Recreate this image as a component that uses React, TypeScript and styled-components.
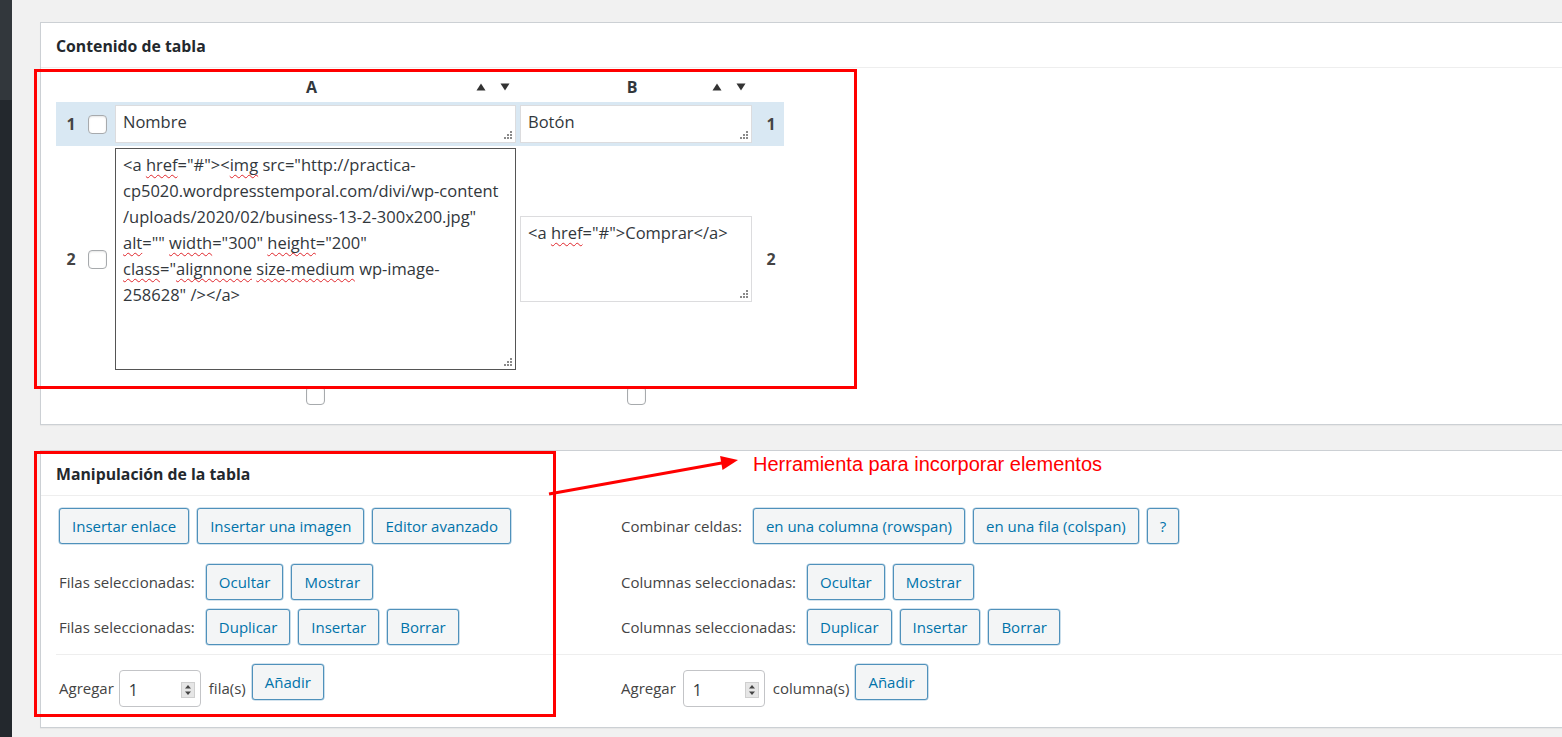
import React from "react";
import styled, { createGlobalStyle } from "styled-components";

const Global = createGlobalStyle`
  html, body { margin: 0; padding: 0; background: #f1f1f1; }
  body { font-family: "Open Sans", "Noto Sans", sans-serif; color: #444; overflow: hidden; }
  * { box-sizing: border-box; }
`;

const Page = styled.div`
  position: relative;
  display: flex;
  width: 1562px;
  height: 737px;
  overflow: hidden;
  background: #f1f1f1;
`;

const Sidebar = styled.div`
  width: 12px;
  flex: none;
  background: linear-gradient(#32373c 0 100px, #23282d 100px);
`;

const Main = styled.main`
  flex: 1;
  padding: 22px 0 0 28px;
  display: flex;
  flex-direction: column;
  gap: 25px;
`;

const Postbox = styled.section`
  background: #fff;
  border: 1px solid #ccd0d4;
  border-right: none;
  box-shadow: 0 1px 1px rgba(0, 0, 0, 0.04);
`;

const BoxTitle = styled.h2`
  margin: 0;
  height: 45px;
  padding: 2px 15px 0;
  display: flex;
  align-items: center;
  font-size: 15.8px;
  font-weight: 700;
  color: #23282d;
  border-bottom: 1px solid #eee;
`;

/* ---------- table editor ---------- */

const EditorArea = styled.div`
  padding: 0 0 19px 15px;
`;

const TRow = styled.div<{ $h: number; $bg?: boolean; $align?: string; $pt?: number }>`
  display: grid;
  grid-template-columns: 26px 31px 405px 236px 30px;
  width: 728px;
  height: ${(p) => p.$h}px;
  padding-top: ${(p) => p.$pt ?? 0}px;
  align-items: ${(p) => p.$align ?? "center"};
  background: ${(p) => (p.$bg ? "#d9e8f3" : "transparent")};
`;

const RowNum = styled.div`
  font-weight: 700;
  font-size: 16px;
  color: #444;
  text-align: center;
  padding-left: 4px;
`;

const CheckCell = styled.div`
  display: flex;
  justify-content: center;
`;

const Check = styled.span`
  display: block;
  width: 19px;
  height: 19px;
  border: 1px solid #a7aaad;
  border-radius: 4px;
  background: #fff;
  box-shadow: inset 0 1px 2px rgba(0, 0, 0, 0.1);
`;

const ColHead = styled.div`
  display: grid;
  grid-template-columns: 1fr auto 1fr;
  align-items: center;
  padding-right: 8px;
`;

const ColLetter = styled.div`
  grid-column: 2;
  font-weight: 700;
  font-size: 16px;
  color: #32373c;
`;

const Sorters = styled.div`
  grid-column: 3;
  justify-self: end;
  display: flex;
  gap: 14px;
`;

const TextCell = styled.div<{ $h: number; $dark?: boolean }>`
  position: relative;
  margin: 0 2px;
  height: ${(p) => p.$h}px;
  border: 1px solid ${(p) => (p.$dark ? "#555" : "#dcdcde")};
  background: #fff;
  padding: 3px 7px;
  font-size: 16.5px;
  line-height: 26px;
  color: #32373c;
  white-space: nowrap;
  overflow: hidden;
`;

const Line = styled.div`
  white-space: nowrap;
`;

const Sq = styled.span`
  text-decoration: underline wavy #e0262b;
  text-decoration-thickness: 1px;
  text-underline-offset: 3px;
  text-decoration-skip-ink: none;
`;

const GripSvg = styled.svg`
  position: absolute;
  right: 2px;
  bottom: 2px;
  display: block;
`;

const Grip = () => (
  <GripSvg width="10" height="10" viewBox="0 0 10 10">
    {[
      [7, 1],
      [7, 4],
      [4, 4],
      [7, 7],
      [4, 7],
      [1, 7],
    ].map(([x, y], i) => (
      <rect key={i} x={x} y={y} width="2" height="2" fill="#8a8a8a" />
    ))}
  </GripSvg>
);

const Up = () => (
  <svg width="10" height="8" viewBox="0 0 10 8">
    <path d="M5 0.5 L9.5 7.5 L0.5 7.5 Z" fill="#333" />
  </svg>
);
const Down = () => (
  <svg width="10" height="8" viewBox="0 0 10 8">
    <path d="M0.5 0.5 L9.5 0.5 L5 7.5 Z" fill="#333" />
  </svg>
);

/* ---------- manipulation tools ---------- */

const ToolsArea = styled.div`
  padding: 12px 0 20px 15px;
`;

const ToolRow = styled.div<{ $mt?: number; $divider?: boolean }>`
  display: grid;
  grid-template-columns: 562px 687px;
  margin-top: ${(p) => p.$mt ?? 0}px;
  ${(p) => (p.$divider ? "border-top: 1px solid #eee; padding-top: 9px;" : "")}
`;

const ToolCell = styled.div<{ $start?: boolean }>`
  display: flex;
  align-items: ${(p) => (p.$start ? "flex-start" : "center")};
  gap: 8px;
  padding-left: 3px;
  min-height: 36px;
`;

const Label = styled.span<{ $mr?: number; $mt?: number }>`
  font-size: 15px;
  color: #444;
  white-space: nowrap;
  margin-right: ${(p) => p.$mr ?? 3}px;
  margin-top: ${(p) => p.$mt ?? 0}px;
  line-height: ${(p) => (p.$mt ? "37px" : "normal")};
`;

const Button = styled.button`
  height: 36px;
  padding: 0 12px;
  font-family: "Open Sans", "Noto Sans", sans-serif;
  font-size: 15px;
  line-height: 34px;
  color: #0073aa;
  background: #f3f5f6;
  border: 1px solid #4f91bb;
  border-radius: 3px;
  box-shadow: 0 0 0 0.6px rgba(79, 145, 187, 0.5);
  white-space: nowrap;
  cursor: pointer;
`;

const NumBox = styled.div<{ $w: number }>`
  width: ${(p) => p.$w}px;
  height: 37px;
  margin-top: 6px;
  border: 1px solid #c3c4c7;
  border-radius: 4px;
  background: #fff;
  display: flex;
  align-items: center;
  justify-content: space-between;
  padding: 3px 5px 0 9px;
  font-size: 16px;
  color: #32373c;
`;

const Spinner = () => (
  <svg width="14" height="16" viewBox="0 0 14 16">
    <rect x="0.5" y="0.5" width="13" height="15" fill="#e6e6e6" stroke="#cfcfcf" />
    <path d="M7 3 L10 6.5 L4 6.5 Z" fill="#444" />
    <path d="M4 9.5 L10 9.5 L7 13 Z" fill="#444" />
  </svg>
);

/* ---------- annotations ---------- */

const Frame = styled.div<{ $x: number; $y: number; $w: number; $h: number }>`
  position: absolute;
  left: ${(p) => p.$x}px;
  top: ${(p) => p.$y}px;
  width: ${(p) => p.$w}px;
  height: ${(p) => p.$h}px;
  border: 3px solid #ff0000;
  pointer-events: none;
`;

const ArrowSvg = styled.svg`
  position: absolute;
  left: 0;
  top: 0;
  pointer-events: none;
`;

const Note = styled.div`
  position: absolute;
  left: 753px;
  top: 453px;
  font-family: "Liberation Sans", Arial, sans-serif;
  font-size: 20px;
  line-height: 23px;
  color: #ff0000;
  white-space: nowrap;
`;

export default function App() {
  return (
    <>
      <Global />
      <Page>
        <Sidebar />
        <Main>
          <Postbox>
            <BoxTitle>Contenido de tabla</BoxTitle>
            <EditorArea>
              <TRow $h={34} $pt={8} $align="start">
                <div />
                <div />
                <ColHead>
                  <ColLetter>A</ColLetter>
                  <Sorters>
                    <Up />
                    <Down />
                  </Sorters>
                </ColHead>
                <ColHead>
                  <ColLetter>B</ColLetter>
                  <Sorters>
                    <Up />
                    <Down />
                  </Sorters>
                </ColHead>
                <div />
              </TRow>
              <TRow $h={44} $bg>
                <RowNum>1</RowNum>
                <CheckCell>
                  <Check />
                </CheckCell>
                <TextCell $h={38}>
                  Nombre
                  <Grip />
                </TextCell>
                <TextCell $h={38}>
                  Botón
                  <Grip />
                </TextCell>
                <RowNum>1</RowNum>
              </TRow>
              <TRow $h={226}>
                <RowNum>2</RowNum>
                <CheckCell>
                  <Check />
                </CheckCell>
                <TextCell $h={222} $dark>
                  <Line>
                    &lt;a <Sq>href</Sq>="#"&gt;&lt;<Sq>img</Sq> src="http://practica-
                  </Line>
                  <Line>cp5020.wordpresstemporal.com/divi/wp-content</Line>
                  <Line>/uploads/2020/02/business-13-2-300x200.jpg"</Line>
                  <Line>
                    <Sq>alt</Sq>="" <Sq>width</Sq>="300" <Sq>height</Sq>="200"
                  </Line>
                  <Line>
                    <Sq>class</Sq>="<Sq>alignnone</Sq> <Sq>size-medium</Sq> wp-image-
                  </Line>
                  <Line>258628" /&gt;&lt;/a&gt;</Line>
                  <Grip />
                </TextCell>
                <TextCell $h={86}>
                  &lt;a <Sq>href</Sq>="#"&gt;Comprar&lt;/a&gt;
                  <Grip />
                </TextCell>
                <RowNum>2</RowNum>
              </TRow>
              <TRow $h={33} $pt={14} $align="start">
                <div />
                <div />
                <CheckCell>
                  <Check />
                </CheckCell>
                <CheckCell>
                  <Check />
                </CheckCell>
                <div />
              </TRow>
            </EditorArea>
          </Postbox>

          <Postbox>
            <BoxTitle>Manipulación de la tabla</BoxTitle>
            <ToolsArea>
              <ToolRow>
                <ToolCell>
                  <Button>Insertar enlace</Button>
                  <Button>Insertar una imagen</Button>
                  <Button>Editor avanzado</Button>
                </ToolCell>
                <ToolCell>
                  <Label>Combinar celdas:</Label>
                  <Button>en una columna (rowspan)</Button>
                  <Button>en una fila (colspan)</Button>
                  <Button>?</Button>
                </ToolCell>
              </ToolRow>
              <ToolRow $mt={20}>
                <ToolCell>
                  <Label>Filas seleccionadas:</Label>
                  <Button>Ocultar</Button>
                  <Button>Mostrar</Button>
                </ToolCell>
                <ToolCell>
                  <Label>Columnas seleccionadas:</Label>
                  <Button>Ocultar</Button>
                  <Button>Mostrar</Button>
                </ToolCell>
              </ToolRow>
              <ToolRow $mt={9}>
                <ToolCell>
                  <Label>Filas seleccionadas:</Label>
                  <Button>Duplicar</Button>
                  <Button>Insertar</Button>
                  <Button>Borrar</Button>
                </ToolCell>
                <ToolCell>
                  <Label>Columnas seleccionadas:</Label>
                  <Button>Duplicar</Button>
                  <Button>Insertar</Button>
                  <Button>Borrar</Button>
                </ToolCell>
              </ToolRow>
              <ToolRow $mt={9} $divider>
                <ToolCell $start>
                  <Label $mt={6} $mr={-3}>Agregar</Label>
                  <NumBox $w={82}>
                    1
                    <Spinner />
                  </NumBox>
                  <Label $mt={6} $mr={-2}>fila(s)</Label>
                  <Button>Añadir</Button>
                </ToolCell>
                <ToolCell $start>
                  <Label $mt={6} $mr={-1}>Agregar</Label>
                  <NumBox $w={82}>
                    1
                    <Spinner />
                  </NumBox>
                  <Label $mt={6} $mr={-2}>columna(s)</Label>
                  <Button>Añadir</Button>
                </ToolCell>
              </ToolRow>
            </ToolsArea>
          </Postbox>
        </Main>

        <Frame $x={34} $y={69} $w={823} $h={320} />
        <Frame $x={34} $y={451} $w={522} $h={266} />
        <ArrowSvg width="1562" height="737" viewBox="0 0 1562 737">
          <line x1="549" y1="494" x2="723" y2="462.8" stroke="#ff0000" strokeWidth="3" />
          <polygon points="738,460 722.5,470 720.1,456" fill="#ff0000" />
        </ArrowSvg>
        <Note>Herramienta para incorporar elementos</Note>
      </Page>
    </>
  );
}
